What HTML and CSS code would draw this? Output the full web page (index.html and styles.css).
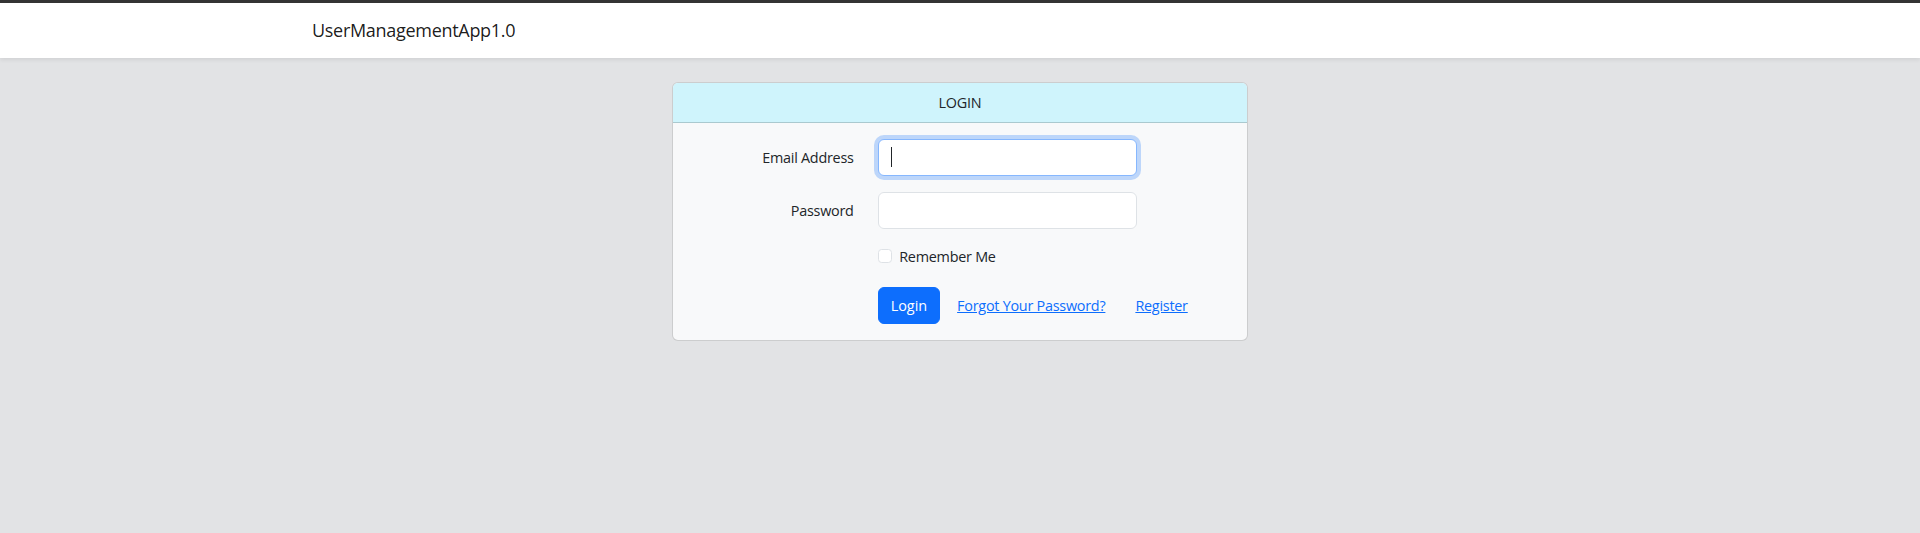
FILE: index.html
```html
<!DOCTYPE html>
<html lang="en">
<head>
<meta charset="utf-8">
<title>UserManagementApp1.0</title>
<link rel="stylesheet" href="styles.css">
</head>
<body>
<nav class="navbar">
  <div class="container">
    <a class="brand" href="#">UserManagementApp1.0</a>
  </div>
</nav>
<main class="main">
  <div class="card">
    <div class="card-header">Login</div>
    <div class="card-body">
      <form class="form">
        <div class="row">
          <label class="col-label" for="email">Email Address</label>
          <div class="col-field field-wrap">
            <input id="email" type="email" class="form-control is-focused">
            <span class="caret"></span>
          </div>
        </div>
        <div class="row">
          <label class="col-label" for="password">Password</label>
          <div class="col-field"><input id="password" type="password" class="form-control"></div>
        </div>
        <div class="row">
          <div class="col-field">
            <div class="form-check">
              <input class="check-input" type="checkbox" id="remember">
              <label class="check-label" for="remember">Remember Me</label>
            </div>
          </div>
        </div>
        <div class="row row-last">
          <div class="col-actions">
            <button type="button" class="btn btn-primary">Login</button>
            <a class="btn btn-link" href="#">Forgot Your Password?</a>
            <a class="btn btn-link" href="#">Register</a>
          </div>
        </div>
      </form>
    </div>
  </div>
</main>
</body>
</html>
```
FILE: styles.css
```css
* { box-sizing: border-box; }
html, body { margin: 0; }
body {
  background: #e2e3e5;
  font-family: "Open Sans", "Noto Sans", sans-serif;
  font-size: 14.4px;
  line-height: 1.6;
  letter-spacing: -0.25px;
  color: #212529;
  border-top: 3px solid #343434;
  min-height: 100vh;
}
.navbar {
  background: #fff;
  padding: 8px 0;
  box-shadow: 0 2px 4px rgba(0,0,0,.075);
  position: relative;
}
.container {
  max-width: 1320px;
  margin: 0 auto;
  padding: 0 12px;
}
.brand {
  display: inline-block;
  font-size: 18px;
  line-height: 28.8px;
  padding: 5px 0;
  letter-spacing: -0.3px;
  color: rgba(0,0,0,.9);
  text-decoration: none;
}
.main { padding: 24px 0; }
.card {
  width: 576px;
  margin: 0 auto;
  background: #f8f9fa;
  border: 1px solid rgba(0,0,0,.175);
  border-radius: 6px;
  overflow: hidden;
}
.card-header {
  background: #cff4fc;
  padding: 8px 16px;
  border-bottom: 1px solid rgba(0,0,0,.175);
  text-align: center;
  text-transform: uppercase;
}
.card-body { padding: 16px; }
.row {
  display: grid;
  grid-template-columns: 4fr 6fr 2fr;
  margin: 0 -12px 16px;
}
.row-last { margin-bottom: 0; }
.row > * { padding: 0 12px; }
.col-label {
  grid-column: 1;
  text-align: right;
  padding-top: 7px;
  padding-bottom: 7px;
}
.col-field { grid-column: 2; }
.field-wrap { position: relative; }
.caret {
  position: absolute;
  left: 25px;
  top: 8px;
  width: 1px;
  height: 20px;
  background: #212529;
}
.col-actions {
  grid-column: 2 / span 2;
  display: flex;
  align-items: center;
  gap: 4px;
}
.form-control {
  display: block;
  width: 100%;
  height: 37px;
  padding: 6px 12px;
  font: inherit;
  color: #212529;
  background: #fff;
  border: 1px solid #dee2e6;
  border-radius: 6px;
  outline: none;
}
.form-control.is-focused, .form-control:focus {
  border-color: #86b7fe;
  box-shadow: 0 0 0 4px rgba(13,110,253,.25);
}
.form-check {
  min-height: 24px;
  margin-bottom: 2px;
  padding-left: 21.6px;
  display: flex;
  align-items: flex-start;
}
.check-input {
  appearance: none;
  -webkit-appearance: none;
  width: 14.4px;
  height: 14.4px;
  margin: 3.6px 0 0 -21.6px;
  background: #fff;
  border: 1px solid #dee2e6;
  border-radius: 3.6px;
  flex: none;
}
.check-label { margin-left: 7.2px; }
.btn {
  display: inline-block;
  padding: 6px 12px;
  font: inherit;
  line-height: 23.04px;
  border: 1px solid transparent;
  border-radius: 6px;
  cursor: pointer;
}
.btn-primary {
  background: #0d6efd;
  border-color: #0d6efd;
  color: #fff;
}
.btn-link {
  color: #0d6efd;
  text-decoration: underline;
}
```
